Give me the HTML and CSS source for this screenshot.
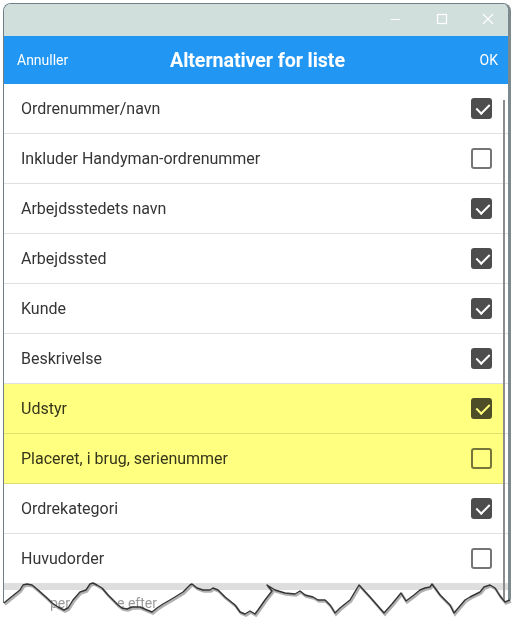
FILE: index.html
```html
<!DOCTYPE html>
<html lang="da">
<head>
  <meta charset="UTF-8" />
  <title>Alternativer for liste</title>
  <link rel="stylesheet" href="styles.css">
</head>
<body>
  <div class="window">
    <!-- window chrome -->
    <div class="titlebar">
      <svg class="winbtn" width="16" height="16" viewBox="0 0 16 16"><path d="M3 8.5h9" stroke="#fff" stroke-width="1.2"/></svg>
      <svg class="winbtn" width="16" height="16" viewBox="0 0 16 16"><rect x="3.5" y="3.5" width="9" height="9" fill="none" stroke="#fff" stroke-width="1.2"/></svg>
      <svg class="winbtn" width="16" height="16" viewBox="0 0 16 16"><path d="M3 3l10 10M13 3L3 13" stroke="#fff" stroke-width="1.1"/></svg>
    </div>

    <div class="appbar">
      <span class="appbar-btn">Annuller</span>
      <span class="appbar-title">Alternativer for liste</span>
      <span class="appbar-btn right">OK</span>
    </div>

    <div class="list">
      <div class="scrollbar"></div>
      <div class="row"><span>Ordrenummer/navn</span><i class="cb on"></i></div>
      <div class="row"><span>Inkluder Handyman-ordrenummer</span><i class="cb"></i></div>
      <div class="row"><span>Arbejdsstedets navn</span><i class="cb on"></i></div>
      <div class="row"><span>Arbejdssted</span><i class="cb on"></i></div>
      <div class="row"><span>Kunde</span><i class="cb on"></i></div>
      <div class="row"><span>Beskrivelse</span><i class="cb on"></i></div>
      <div class="row hl"><span>Udstyr</span><i class="cb on"></i></div>
      <div class="row hl"><span>Placeret, i brug, serienummer</span><i class="cb"></i></div>
      <div class="row"><span>Ordrekategori</span><i class="cb on"></i></div>
      <div class="row"><span>Huvudorder</span><i class="cb"></i></div>
      <div class="section-gap"></div>
    </div>
  </div>

  <!-- torn paper edge -->
  <svg class="tear" width="516" height="50" viewBox="0 575 516 50">
    <path fill="#fff" d="M0 603 L4 603 L10 598 L20 590 L23 585 L27 584 L32 585 L38 590 L47 598 L52 603 L58 607 L64 610 L68 608 L73 600 L80 592 L86 590 L90 584 L93 583 L97 585 L102 588 L108 595 L118 605 L122 608 L127 609 L132 607 L140 607 L147 610 L152 612 L157 608 L163 604 L170 600 L175 597 L183 592 L190 585 L192 584 L197 588 L203 590 L210 590 L213 588 L218 590 L225 597 L230 601 L235 605 L240 612 L245 614 L250 611 L255 614 L258 610 L265 600 L267 596 L272 591 L267 585 L275 590 L285 593 L295 594 L300 591 L305 595 L313 597 L318 600 L325 600 L330 605 L335 613 L340 608 L350 600 L359 585 L370 597 L384 613 L392 604 L401 593 L406 601 L414 595 L420 590 L425 588 L430 587 L432 584 L440 595 L450 605 L454 613 L465 600 L470 597 L480 592 L484 587 L490 585 L495 588 L500 596 L505 602 L510 600 L516 596 L516 625 L0 625 Z"/>
    <text x="50" y="608" class="ghost">per</text>
    <text x="117" y="608" class="ghost">e efter</text>
    <path class="tear-shadow" d="M4 603 L10 598 L20 590 L23 585 L27 584 L32 585 L38 590 L47 598 L52 603 L58 607 L64 610 L68 608 L73 600 L80 592 L86 590 L90 584 L93 583 L97 585 L102 588 L108 595 L118 605 L122 608 L127 609 L132 607 L140 607 L147 610 L152 612 L157 608 L163 604 L170 600 L175 597 L183 592 L190 585 L192 584 L197 588 L203 590 L210 590 L213 588 L218 590 L225 597 L230 601 L235 605 L240 612 L245 614 L250 611 L255 614 L258 610 L265 600 L272 591 L267 585 L275 590 L285 593 L295 594 L300 591 L305 595 L313 597 L318 600 L325 600 L330 605 L335 613 L340 608 L350 600 L359 585 L370 597 L384 613 L392 604 L401 593 L406 601 L414 595 L420 590 L425 588 L430 587 L432 584 L440 595 L450 605 L454 613 L465 600 L470 597 L480 592 L484 587 L490 585 L495 588 L500 596 L505 602 L510 600"/>
    <path class="tear-line" d="M4 603 L10 598 L20 590 L23 585 L27 584 L32 585 L38 590 L47 598 L52 603 L58 607 L64 610 L68 608 L73 600 L80 592 L86 590 L90 584 L93 583 L97 585 L102 588 L108 595 L118 605 L122 608 L127 609 L132 607 L140 607 L147 610 L152 612 L157 608 L163 604 L170 600 L175 597 L183 592 L190 585 L192 584 L197 588 L203 590 L210 590 L213 588 L218 590 L225 597 L230 601 L235 605 L240 612 L245 614 L250 611 L255 614 L258 610 L265 600 L272 591 L267 585 L275 590 L285 593 L295 594 L300 591 L305 595 L313 597 L318 600 L325 600 L330 605 L335 613 L340 608 L350 600 L359 585 L370 597 L384 613 L392 604 L401 593 L406 601 L414 595 L420 590 L425 588 L430 587 L432 584 L440 595 L450 605 L454 613 L465 600 L470 597 L480 592 L484 587 L490 585 L495 588 L500 596 L505 602 L510 600"/>
  </svg>
</body>
</html>
```

FILE: styles.css
```css
* { box-sizing: border-box; margin: 0; padding: 0; }

body {
  font-family: Roboto, "Noto Sans", sans-serif;
  background: #fff;
  width: 516px;
  height: 625px;
  overflow: hidden;
  position: relative;
}

.window {
  margin: 3px 0 0 3px;
  width: 508px;
  height: 640px;
  border: 1px solid #6f7f86;
  border-right: 3px solid #7c8a8e;
  border-radius: 8px 8px 0 0;
  overflow: hidden;
  background: #fff;
  display: flex;
  flex-direction: column;
}

.titlebar {
  height: 32px;
  background: #d1dfdc;
  display: flex;
  justify-content: flex-end;
  align-items: center;
  gap: 30px;
  padding: 0 12px 2px 0;
}

.winbtn { display: block; }

.appbar {
  height: 48px;
  background: #2196f3;
  color: #fff;
  display: grid;
  grid-template-columns: 1fr auto 1fr;
  align-items: center;
  padding: 0 10px 0 13px;
}

.appbar-btn { font-size: 14px; }
.appbar-btn.right { justify-self: end; }

.appbar-title {
  font-size: 19.7px;
  font-weight: 700;
  letter-spacing: -0.1px;
}

.list {
  position: relative;
  flex: 1;
}

.scrollbar {
  position: absolute;
  right: 3px;
  top: 16px;
  bottom: 0;
  width: 2px;
  background: #8c8c8c;
  z-index: 3;
}

.row {
  position: relative;
  height: 50px;
  border-bottom: 1px solid #e0e0e0;
  display: flex;
  align-items: center;
  justify-content: space-between;
  padding: 0 16px 0 17px;
  font-size: 16px;
  color: #353535;
}

/* yellow marker over the rows */
.row.hl::after {
  content: "";
  position: absolute;
  left: 0;
  top: 0;
  right: 5px;
  bottom: -1px;
  background: #ffff80;
  mix-blend-mode: multiply;
  pointer-events: none;
}

.cb {
  width: 21px;
  height: 21px;
  border: 2px solid #757575;
  border-radius: 3px;
  display: block;
  position: relative;
}

.cb.on {
  background: #4d4d4d;
  border-color: #4d4d4d;
}

.cb.on::after {
  content: "";
  position: absolute;
  left: 5.5px;
  top: 0.5px;
  width: 6px;
  height: 11px;
  border: solid #fff;
  border-width: 0 2.5px 2.5px 0;
  transform: rotate(45deg);
}

.section-gap {
  height: 7px;
  background: #dedede;
  margin-top: -1px;
}

.tear {
  position: absolute;
  left: 0;
  bottom: 0;
  z-index: 5;
}

.tear-line {
  fill: none;
  stroke: #333;
  stroke-width: 1.4;
  stroke-linejoin: round;
}

.tear-shadow {
  fill: none;
  stroke: #b0b0b0;
  stroke-width: 2.5;
  transform: translate(1px, 1.5px);
}

.ghost {
  font-family: Roboto, sans-serif;
  font-size: 14px;
  fill: #9a9a9a;
}
```
